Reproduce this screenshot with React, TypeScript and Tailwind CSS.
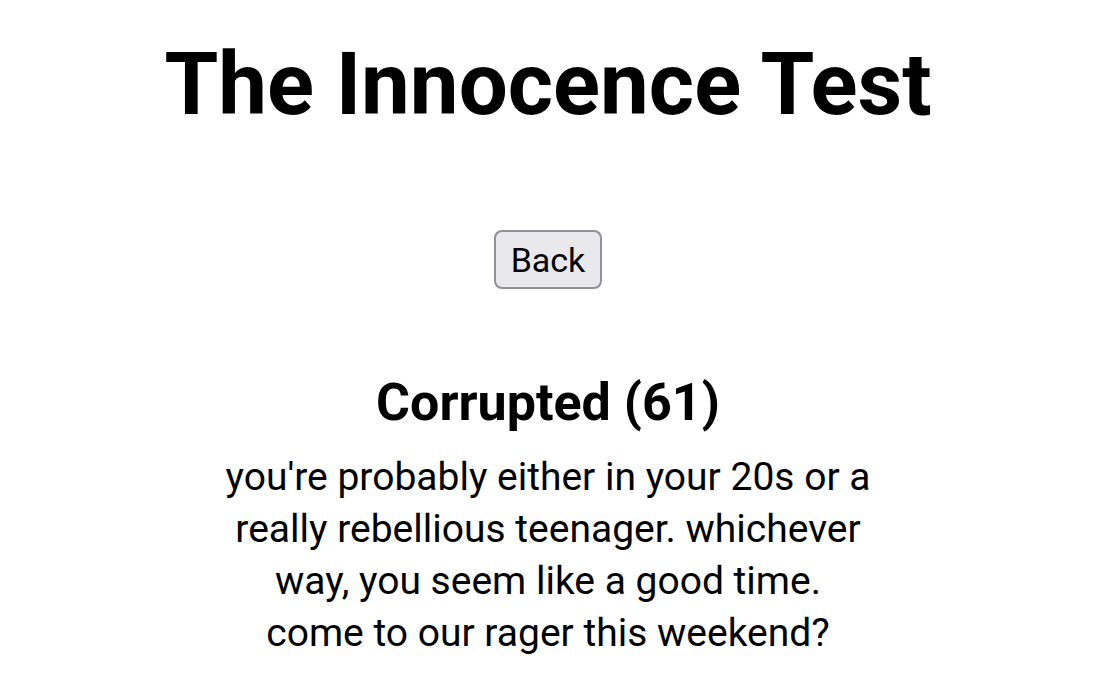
export default function App() {
  return (
    <div className="min-h-[680px] bg-white text-black font-['Roboto',sans-serif] flex flex-col items-center">
      <h1 className="mt-[31px] text-[87px] leading-[106px] font-bold">The Innocence Test</h1>
      <button className="mt-[93px] h-[59px] px-[15px] text-[34px] leading-none bg-[#e9e9ed] border-2 border-[#8f8f9d] rounded-[8px]">
        Back
      </button>
      <h2 className="mt-[84px] text-[52px] leading-[60px] font-bold">Corrupted (61)</h2>
      <p className="mt-[18px] text-[39px] leading-[52px] text-center">
        you're probably either in your 20s or a
        <br />
        really rebellious teenager. whichever
        <br />
        way, you seem like a good time.
        <br />
        come to our rager this weekend?
      </p>
    </div>
  )
}
